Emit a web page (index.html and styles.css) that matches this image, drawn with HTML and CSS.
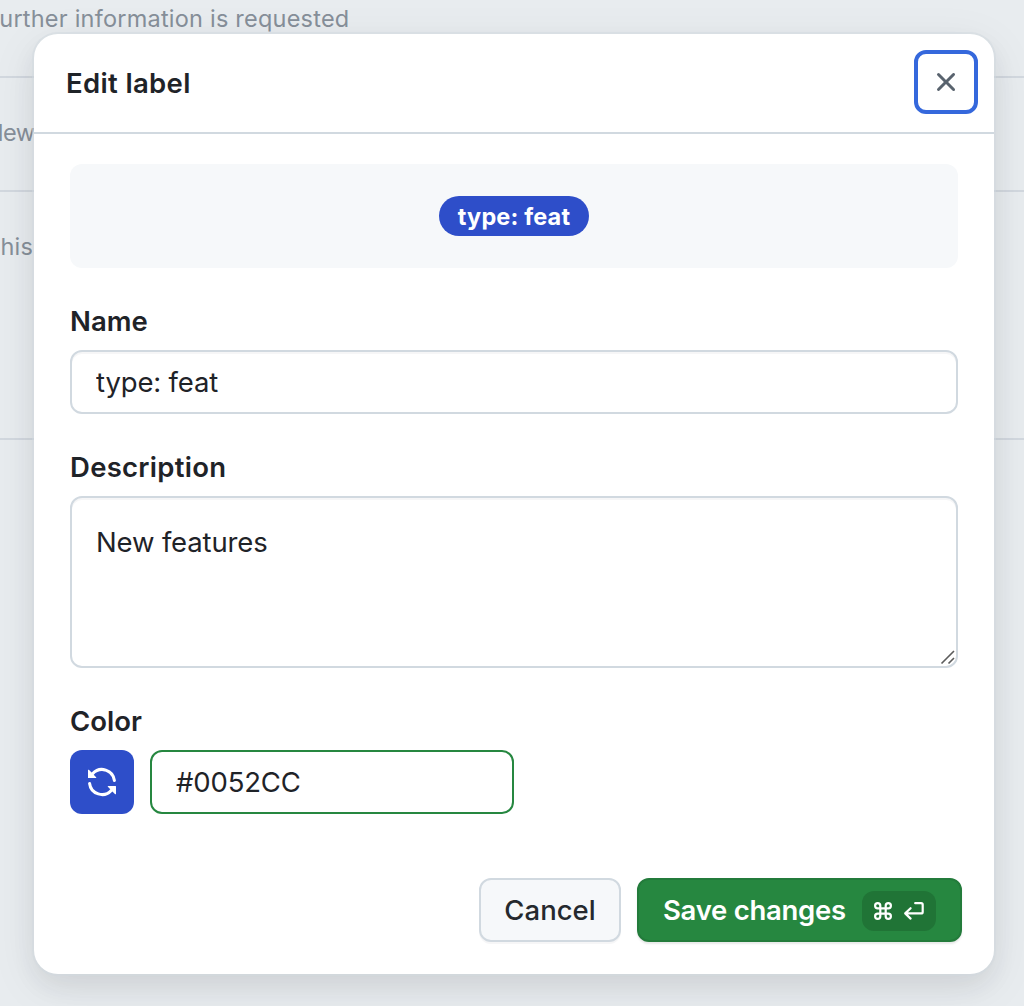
FILE: index.html
```html
<!DOCTYPE html>
<html lang="en">
<head>
<meta charset="utf-8">
<title>Edit label</title>
<link rel="stylesheet" href="styles.css">
</head>
<body>
<ul class="label-list">
  <li class="label-row">Further information is requested</li>
  <li class="label-row label-row--new">New</li>
  <li class="label-row label-row--last">This</li>
</ul>
<div class="overlay">
  <form class="dialog" role="dialog" aria-labelledby="dialog-title">
    <header class="dialog-header">
      <h1 class="dialog-title" id="dialog-title">Edit label</h1>
      <button class="close" type="button" aria-label="Close">
        <svg class="icon" viewBox="0 0 16 16"><path d="M3.72 3.72a.75.75 0 0 1 1.06 0L8 6.94l3.22-3.22a.749.749 0 0 1 1.275.326.749.749 0 0 1-.215.734L9.06 8l3.22 3.22a.749.749 0 0 1-.326 1.275.749.749 0 0 1-.734-.215L8 9.06l-3.22 3.22a.751.751 0 0 1-1.042-.018.751.751 0 0 1-.018-1.042L6.94 8 3.72 4.78a.75.75 0 0 1 0-1.06Z"/></svg>
      </button>
    </header>
    <div class="dialog-body">
      <div class="preview"><span class="pill">type: feat</span></div>
      <div class="field">
        <label class="field-label" for="name">Name</label>
        <input class="control" id="name" type="text" value="type: feat">
      </div>
      <div class="field">
        <label class="field-label field-label--wide" for="description">Description</label>
        <div class="textarea-wrap">
          <textarea class="control textarea" id="description">New features</textarea>
          <svg class="grip" viewBox="0 0 16 16"><path d="M1.5 14.5 14 2M8.5 14.5 14 9"/></svg>
        </div>
      </div>
      <div class="field">
        <label class="field-label" for="color">Color</label>
        <div class="color-row">
          <button class="refresh" type="button" aria-label="New color">
            <svg class="icon" viewBox="0 0 16 16"><path d="M1.705 8.005a.75.75 0 0 1 .834.656 5.5 5.5 0 0 0 9.592 2.97l-1.204-1.204a.25.25 0 0 1 .177-.427h3.646a.25.25 0 0 1 .25.25v3.646a.25.25 0 0 1-.427.177l-1.38-1.38A7.002 7.002 0 0 1 1.05 8.84a.75.75 0 0 1 .656-.834ZM8 2.5a5.487 5.487 0 0 0-4.131 1.869l1.204 1.204A.25.25 0 0 1 4.896 6H1.25A.25.25 0 0 1 1 5.75V2.104a.25.25 0 0 1 .427-.177l1.38 1.38A7.002 7.002 0 0 1 14.95 7.16a.75.75 0 0 1-1.49.178A5.5 5.5 0 0 0 8 2.5Z"/></svg>
          </button>
          <input class="control control--color" id="color" type="text" value="#0052CC">
        </div>
      </div>
    </div>
    <footer class="dialog-footer">
      <button class="button" type="button">Cancel</button>
      <button class="button button--primary" type="button">
        <span>Save changes</span>
        <span class="shortcut">
          <svg class="command" viewBox="0 0 20 20"><path d="M7.3 7.3h5.4v5.4H7.3zM7.3 7.3H4.7A2.6 2.6 0 1 1 7.3 4.7zM12.7 7.3V4.7A2.6 2.6 0 1 1 15.3 7.3zM12.7 12.7h2.6A2.6 2.6 0 1 1 12.7 15.3zM7.3 12.7v2.6A2.6 2.6 0 1 1 4.7 12.7z"/></svg>
          <svg class="enter" viewBox="0 0 22 20"><path d="M12.2 2.2h6a1.5 1.5 0 0 1 1.5 1.5v7.2a1.5 1.5 0 0 1-1.5 1.5H2.5M7.6 7.2 2.2 12.4l5.4 5.2"/></svg>
        </span>
      </button>
    </footer>
  </form>
</div>
</body>
</html>
```
FILE: styles.css
```css
* {
  box-sizing: border-box;
}

body {
  margin: 0;
  height: 1006px;
  overflow: hidden;
  background: #e8ecef;
  color: #1f2328;
  font-family: Inter, "Liberation Sans", sans-serif;
  font-size: 27.5px;
}

button,
input,
textarea {
  font: inherit;
  color: inherit;
  margin: 0;
}

.label-list {
  list-style: none;
  margin: -36px 0 0;
  padding: 0;
}

.label-row {
  height: 114px;
  padding-top: 37px;
  border-bottom: 2px solid #d2d8df;
  color: #868f99;
  font-size: 23.5px;
  line-height: 36px;
  letter-spacing: 0.22px;
  text-indent: -14px;
  white-space: nowrap;
}

.label-row--new {
  text-indent: -14px;
  letter-spacing: -0.6px;
}

.label-row--last {
  height: 248px;
  text-indent: -15px;
}

.overlay {
  position: absolute;
  inset: 0;
  padding: 34px 30px 32px 34px;
}

.dialog {
  height: 940px;
  background: #fff;
  border-radius: 24px;
  box-shadow: 0 0 0 2px rgba(209, 217, 224, 0.5), 0 12px 24px rgba(37, 41, 46, 0.07), 0 12px 48px rgba(37, 41, 46, 0.08);
}

.dialog-header {
  display: flex;
  align-items: center;
  justify-content: space-between;
  height: 100px;
  padding: 0 16px 2px 32px;
  border-bottom: 2px solid #d1d9e0;
}

.dialog-title {
  margin: 0;
  padding-top: 2px;
  font-size: 27.5px;
  font-weight: 600;
  letter-spacing: 0.35px;
}

.close {
  display: flex;
  align-items: center;
  justify-content: center;
  width: 64px;
  height: 64px;
  padding: 0;
  background: none;
  border: 4px solid #3568dc;
  border-radius: 12px;
  color: #59636e;
}

.icon {
  width: 32px;
  height: 32px;
  fill: currentColor;
}

.dialog-body {
  display: flex;
  flex-direction: column;
  gap: 32px;
  padding: 30px 36px 0;
}

.preview {
  display: flex;
  align-items: center;
  justify-content: center;
  height: 104px;
  background: #f6f8fa;
  border-radius: 12px;
}

.pill {
  width: 150px;
  height: 40px;
  border-radius: 20px;
  background: #2e4ec9;
  color: #fff;
  font-size: 23.5px;
  font-weight: 700;
  line-height: 41px;
  letter-spacing: 0.15px;
  text-align: center;
}

.field {
  display: flex;
  flex-direction: column;
  gap: 8px;
}

.field-label {
  height: 42px;
  font-weight: 600;
  line-height: 42px;
}

.field-label--wide {
  letter-spacing: 0.28px;
}

.control {
  display: block;
  width: 100%;
  height: 64px;
  padding: 0 24px;
  background: #fff;
  border: 2px solid #d1d9e0;
  border-radius: 12px;
  box-shadow: inset 0 2px 0 rgba(31, 35, 40, 0.04);
  letter-spacing: -0.15px;
  outline: none;
}

.textarea-wrap {
  position: relative;
}

.textarea {
  height: 172px;
  padding: 23px 24px;
  line-height: 42px;
  resize: none;
}

.grip {
  position: absolute;
  right: 2px;
  bottom: 3px;
  width: 16px;
  height: 16px;
  fill: none;
  stroke: #5c5c5c;
  stroke-width: 1.6;
}

.color-row {
  display: flex;
  gap: 16px;
}

.refresh {
  display: flex;
  align-items: center;
  justify-content: center;
  width: 64px;
  height: 64px;
  padding: 0;
  border: 0;
  border-radius: 12px;
  background: #2e4ec9;
  color: #fff;
}

.control--color {
  width: 364px;
  border-color: #268740;
  box-shadow: none;
}

.dialog-footer {
  display: flex;
  justify-content: flex-end;
  gap: 16px;
  padding: 64px 32px 0;
}

.button {
  display: flex;
  align-items: center;
  justify-content: center;
  width: 142px;
  height: 64px;
  padding: 0;
  background: #f6f8fa;
  border: 2px solid #d1d9e0;
  border-radius: 12px;
  box-shadow: 0 2px 0 rgba(31, 35, 40, 0.04);
  color: #25292e;
  font-weight: 500;
  white-space: nowrap;
}

.button--primary {
  justify-content: space-between;
  width: 325px;
  padding: 0 24px;
  background: #268740;
  border-color: #237b3b;
  box-shadow: 0 2px 2px rgba(31, 35, 40, 0.1);
  color: #fff;
  font-weight: 600;
  letter-spacing: -0.28px;
}

.shortcut {
  display: flex;
  align-items: center;
  gap: 10px;
  width: 74px;
  height: 40px;
  margin-top: 2px;
  padding-left: 11px;
  background: #207436;
  border-radius: 12px;
}

.command,
.enter {
  width: 20px;
  height: 20px;
  fill: none;
  stroke: #fff;
  stroke-width: 2.2;
  stroke-linecap: round;
  stroke-linejoin: round;
}

.enter {
  width: 22px;
}
```
